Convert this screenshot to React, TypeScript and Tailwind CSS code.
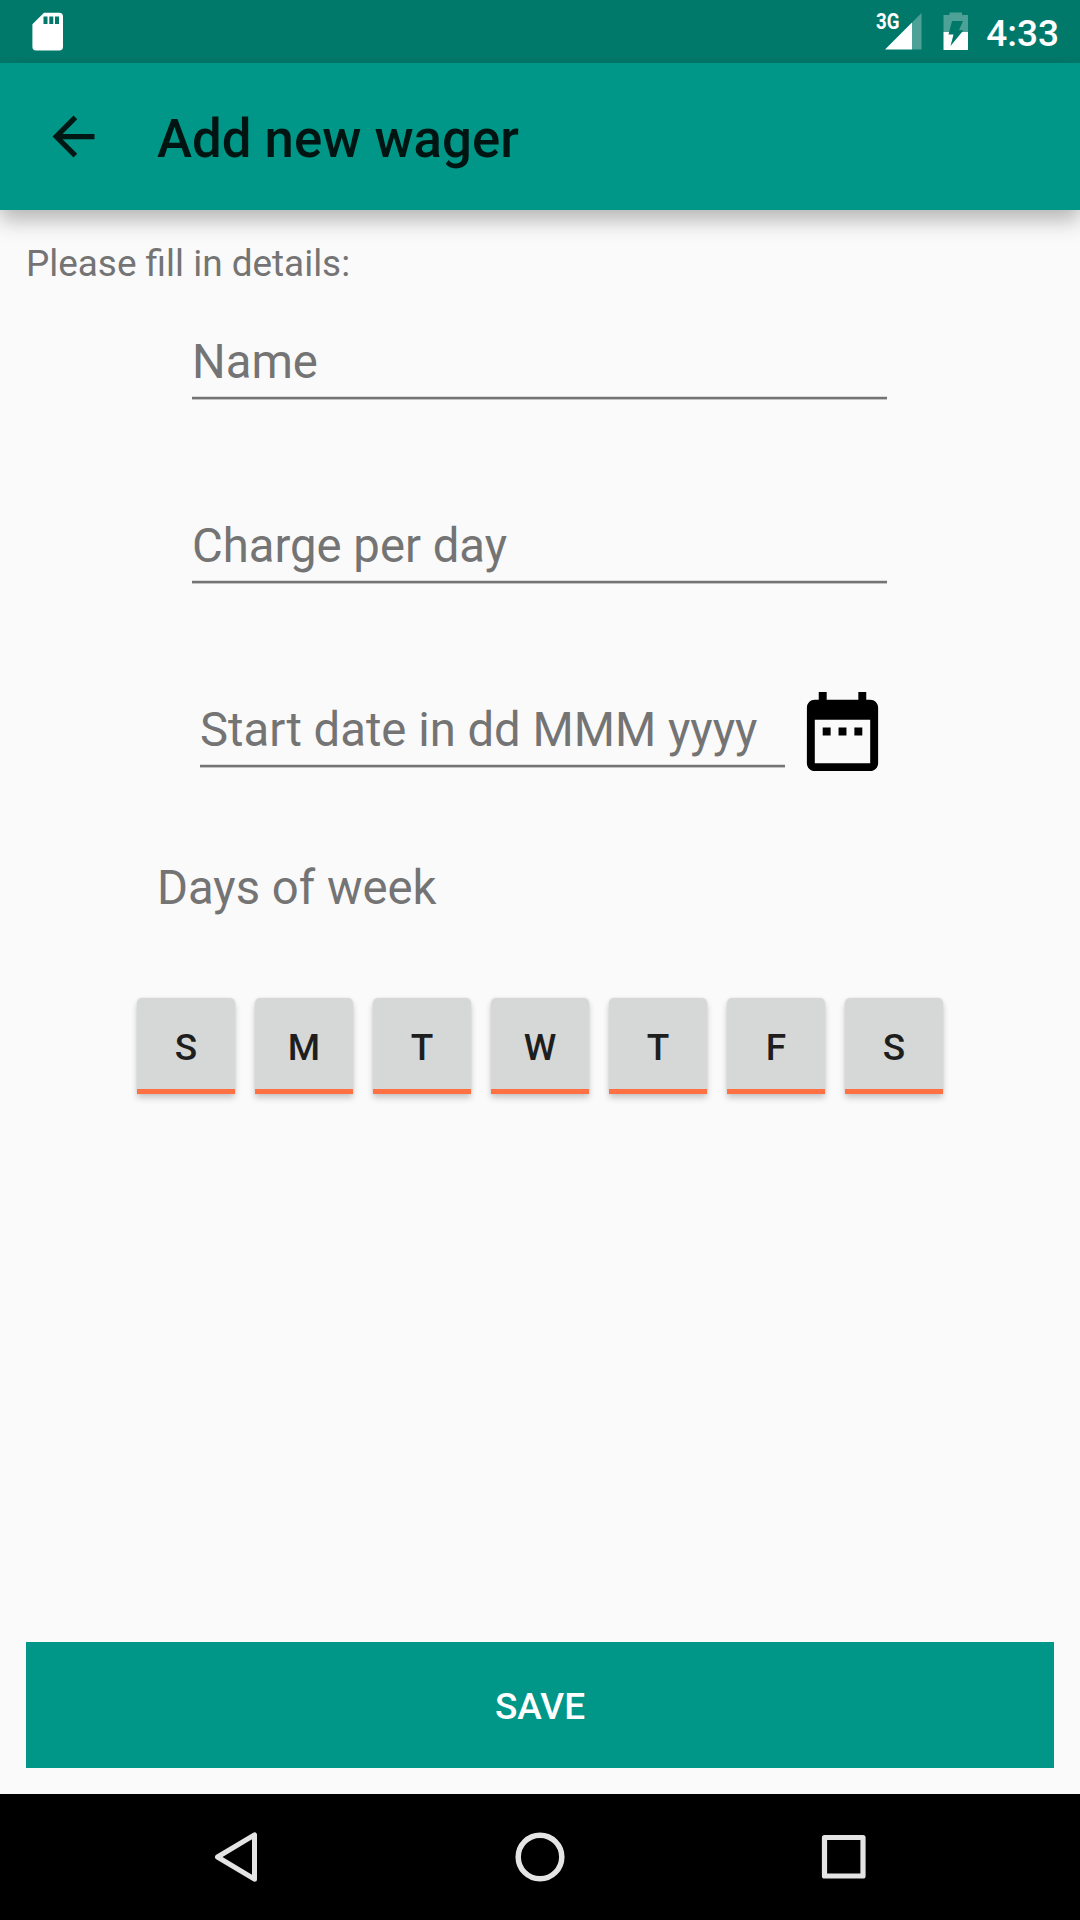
import React from "react";

const DAYS = ["S", "M", "T", "W", "T", "F", "S"];

function StatusBar() {
  return (
    <div className="flex h-[63px] shrink-0 items-start bg-[#00796b] text-white">
      <svg className="ml-8 mt-3 h-[39px] w-[31px]" viewBox="0 0 31 39">
        <path
          fillRule="evenodd"
          fill="#fff"
          d="M12 .7H27.200a3.800 3.800 0 0 1 3.800 3.800V34.700a3.800 3.800 0 0 1-3.800 3.800H4.200A3.800 3.800 0 0 1 .4 34.700V12.200ZM11.500 4.500V12h4V4.500ZM17.300 4.500V12h4V4.500ZM23 4.500V12h4V4.500Z"
        />
      </svg>
      <div className="relative ml-auto mt-3 h-[38px] w-[46px]">
        <svg className="h-[38px] w-[46px]" viewBox="0 0 46 38">
          <path fill="#fff" d="M36 10.500V37.500H9Z" />
          <path fill="#4da197" d="M36 10.500L45.500 1V37.500H36Z" />
        </svg>
        <span className="absolute left-0 top-0 origin-left scale-x-[0.850] text-[22px] font-bold leading-[20px]">
          3G
        </span>
      </div>
      <svg className="ml-[21px] mt-3 h-[38px] w-[26px]" viewBox="0 0 26 38">
        <path fill="#4da197" d="M.5 3H6.500V.5H19V3H25V20H.5Z" />
        <path fill="#fff" d="M.5 20H25V38H.5Z" />
        <path fill="#00796b" d="M9 9H20L16 18.200H20.500L7.500 34L10.500 22.500H5.500Z" />
      </svg>
      <span className="ml-[17px] mr-[21px] mt-3 text-[37px] font-medium leading-[44px]">
        4:33
      </span>
    </div>
  );
}

function Field({ label }: { label: string }) {
  return (
    <div className="flex-1">
      <div className="h-[69px] pt-px text-[47.250px] leading-[69px] text-[#747474]">{label}</div>
      <div className="h-1 border-b border-t border-b-[#c4c4c4] border-t-[#dadada] bg-[#747474]" />
    </div>
  );
}

export default function App() {
  return (
    <div className="flex h-[1920px] w-[1080px] flex-col overflow-hidden bg-[#fafafa] font-['Roboto',sans-serif]">
      <StatusBar />
      <header className="z-10 flex h-[147px] shrink-0 items-center bg-[#009788] shadow-[0_10px_20px_rgba(0,0,0,0.280)]">
        <svg className="ml-[42px] h-[63px] w-[63px]" viewBox="0 0 24 24">
          <path fill="#001714" d="M20 11H7.830l5.590-5.590L12 4l-8 8 8 8 1.410-1.410L7.830 13H20v-2z" />
        </svg>
        <h1 className="ml-[52px] pt-[5px] text-[52.750px] font-medium leading-[62px] text-[#001412]">
          Add new wager
        </h1>
      </header>

      <main className="flex flex-1 flex-col px-[26px] pb-[26px] pt-8">
        <p className="text-[36.900px] leading-[43px] text-[#747474]">Please fill in details:</p>

        <div className="ml-[166px] mt-[42px] flex w-[695px] flex-col gap-[111px]">
          <div className="flex">
            <Field label="Name" />
          </div>
          <div className="flex">
            <Field label="Charge per day" />
          </div>
          <div className="flex h-[73px] items-center pl-2">
            <Field label="Start date in dd MMM yyyy" />
            <svg className="ml-[10px] mr-[-3px] h-[95px] w-[95px] shrink-0" viewBox="0 0 24 24">
              <path d="M9 11H7v2h2v-2zm4 0h-2v2h2v-2zm4 0h-2v2h2v-2zm2-7h-1V2h-2v2H8V2H6v2H5c-1.110 0-1.990.9-1.990 2L3 20c0 1.100.89 2 2 2h14c1.100 0 2-.9 2-2V6c0-1.100-.9-2-2-2zm0 16H5V9h14v11z" />
            </svg>
          </div>
        </div>

        <p className="ml-[131px] mt-[93px] text-[47.250px] leading-[55px] text-[#747474]">Days of week</p>

        <div className="ml-[111px] mt-[82px] flex gap-5">
          {DAYS.map((day, i) => (
            <button
              key={i}
              className="flex h-24 w-[98px] flex-col overflow-hidden rounded-t-[5px] bg-[#d6d8d7] text-[37px] font-medium text-[#1e1e1e] shadow-[0_4px_6px_rgba(0,0,0,0.200),0_0_3px_rgba(0,0,0,0.080)]"
            >
              <span className="h-[91px] w-full pt-[5px] text-center leading-[89px]">{day}</span>
              <span className="h-[5px] w-full bg-[#ff7043]" />
            </button>
          ))}
        </div>

        <button className="mt-auto h-[126px] w-full bg-[#009788] pt-1 text-[37px] font-medium text-white">
          SAVE
        </button>
      </main>

      <nav className="flex h-[126px] shrink-0 items-center justify-between bg-black pl-[211px] pr-[212px]">
        <svg className="h-[52px] w-[50px]" viewBox="0 0 50 52" fill="none" stroke="#e4e4e4">
          <path strokeWidth="5" strokeLinejoin="round" d="M43.500 3.800V48.200L6.500 26Z" />
        </svg>
        <svg className="h-[52px] w-[52px]" viewBox="0 0 52 52" fill="none" stroke="#e4e4e4">
          <circle cx="26" cy="26" r="21.800" strokeWidth="5.500" />
        </svg>
        <svg className="h-[52px] w-[50px]" viewBox="0 0 50 52" fill="none" stroke="#e4e4e4">
          <rect x="6.500" y="6.500" width="38.500" height="38.500" strokeWidth="5.200" strokeLinejoin="round" />
        </svg>
      </nav>
    </div>
  );
}
